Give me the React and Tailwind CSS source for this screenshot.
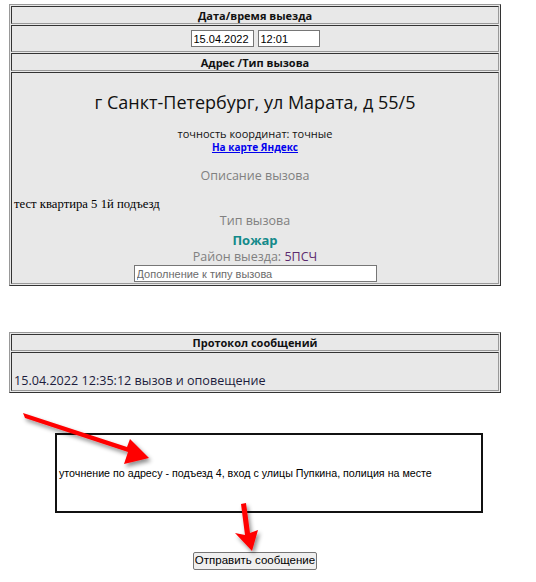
import React from 'react';

const Cell = ({ className = '', children }) => (
    <div className={`border border-t-[#333] border-l-[#333] border-b-[#999] border-r-[#999] bg-[#e8e8e8] ${className}`}>
        {children}
    </div>
);

const Table = ({ className = '', children }) => (
    <div className={`ml-[9px] w-[492px] border border-t-[#999] border-l-[#999] border-b-[#333] border-r-[#333] bg-[#e8e8e8] p-px flex flex-col gap-px ${className}`}>
        {children}
    </div>
);

const Arrows = () => (
    <svg className="absolute inset-0 pointer-events-none" width="536" height="582" viewBox="0 0 536 582">
        <defs>
            <filter id="shadow" x="-20%" y="-20%" width="140%" height="140%">
                <feDropShadow dx="2" dy="3" stdDeviation="2" floodColor="#000" floodOpacity="0.45" />
            </filter>
        </defs>
        <g fill="#f00" stroke="none" filter="url(#shadow)">
            {/* стрелка к тексту сообщения */}
            <polygon points="23,413 25,418 128,452 124,464 149,458 130,439 127,447" />
            {/* стрелка к кнопке */}
            <polygon points="241,504 246,503 250,533 258,530 252,551 235,533 245,535" />
        </g>
    </svg>
);

const App = () => {
    return (
        <div className="relative w-[536px] h-[582px] bg-white overflow-hidden" style={{ fontFamily: '"Open Sans", "Noto Sans", sans-serif' }}>
            <div className="pt-[4px]">
                {/* Таблица вызова */}
                <Table>
                    <Cell className="h-[18px] flex items-center justify-center text-[11px] font-bold text-[#111] leading-none">
                        Дата/время выезда
                    </Cell>
                    <Cell className="h-[27px] flex items-center justify-center gap-[4px]">
                        <input type="text" defaultValue="15.04.2022" className="w-[63px] h-[17px] border border-[#767676] bg-white px-[2px] text-[11px] text-black leading-none" style={{ fontFamily: '"Liberation Sans", Arial, sans-serif' }} />
                        <input type="text" defaultValue="12:01" className="w-[62px] h-[17px] border border-[#767676] bg-white px-[2px] text-[11px] text-black leading-none" style={{ fontFamily: '"Liberation Sans", Arial, sans-serif' }} />
                    </Cell>
                    <Cell className="h-[18px] flex items-center justify-center text-[11px] font-bold text-[#111] leading-none">
                        Адрес /Тип вызова
                    </Cell>
                    <Cell className="h-[212px] flex flex-col items-center">
                        <div className="mt-[17px] h-[24px] leading-[24px] text-[18px] text-[#111]">г Санкт-Петербург, ул Марата, д 55/5</div>
                        <div className="mt-[13px] h-[14px] leading-[14px] text-[11px] text-[#111]">точность координат: точные</div>
                        <a href="#" className="h-[13px] leading-[13px] text-[10px] font-bold text-[#0000ee] underline">На карте Яндекс</a>
                        <div className="mt-[14px] h-[16px] leading-[16px] text-[12.5px] text-[#808080]">Описание вызова</div>
                        <div className="mt-[12px] self-stretch pl-[2px] h-[16px] leading-[16px] text-[12.7px] text-black" style={{ fontFamily: '"Liberation Serif", "Times New Roman", serif' }}>
                            тест квартира 5 1й подъезд
                        </div>
                        <div className="mt-[1px] h-[16px] leading-[16px] text-[12.5px] text-[#808080]">Тип вызова</div>
                        <div className="mt-[3px] h-[16px] leading-[16px] text-[13px] font-bold text-[#138a8a]">Пожар</div>
                        <div className="mt-[1px] h-[16px] leading-[16px] text-[12.5px] text-[#808080]">
                            Район выезда: <span className="text-[#5c2a6e]">5ПСЧ</span>
                        </div>
                        <input type="text" placeholder="Дополнение к типу вызова" className="w-[243px] h-[17px] border border-[#767676] bg-white px-[2px] text-[11px] leading-none placeholder:text-[#6b6b6b]" style={{ fontFamily: '"Liberation Sans", Arial, sans-serif' }} />
                    </Cell>
                </Table>

                {/* Протокол сообщений */}
                <Table className="mt-[46px]">
                    <Cell className="h-[17px] flex items-center justify-center text-[11px] font-bold text-[#111] leading-none">
                        Протокол сообщений
                    </Cell>
                    <Cell className="h-[39px] flex items-end pl-[2px]">
                        <div className="h-[18px] leading-[18px] text-[12.6px] text-[#1c1c3c]">15.04.2022 12:35:12 вызов и оповещение</div>
                    </Cell>
                </Table>

                {/* Новое сообщение */}
                <div className="mt-[40px] ml-[55px] w-[428px] h-[80px] border-2 border-[#111] flex items-center pl-[2px]">
                    <div className="text-[10.7px] text-black leading-none" style={{ fontFamily: '"Liberation Sans", Arial, sans-serif' }}>
                        уточнение по адресу - подъезд 4, вход с улицы Пупкина, полиция на месте
                    </div>
                </div>

                <div className="mt-[39px] ml-[193px] flex">
                    <button type="button" className="w-[124px] h-[18px] border border-[#767676] rounded-[2px] bg-[#efefef] text-[11.5px] text-black leading-none whitespace-nowrap" style={{ fontFamily: '"Liberation Sans", Arial, sans-serif' }}>
                        Отправить сообщение
                    </button>
                </div>
            </div>
            <Arrows />
        </div>
    );
};

export default App;
